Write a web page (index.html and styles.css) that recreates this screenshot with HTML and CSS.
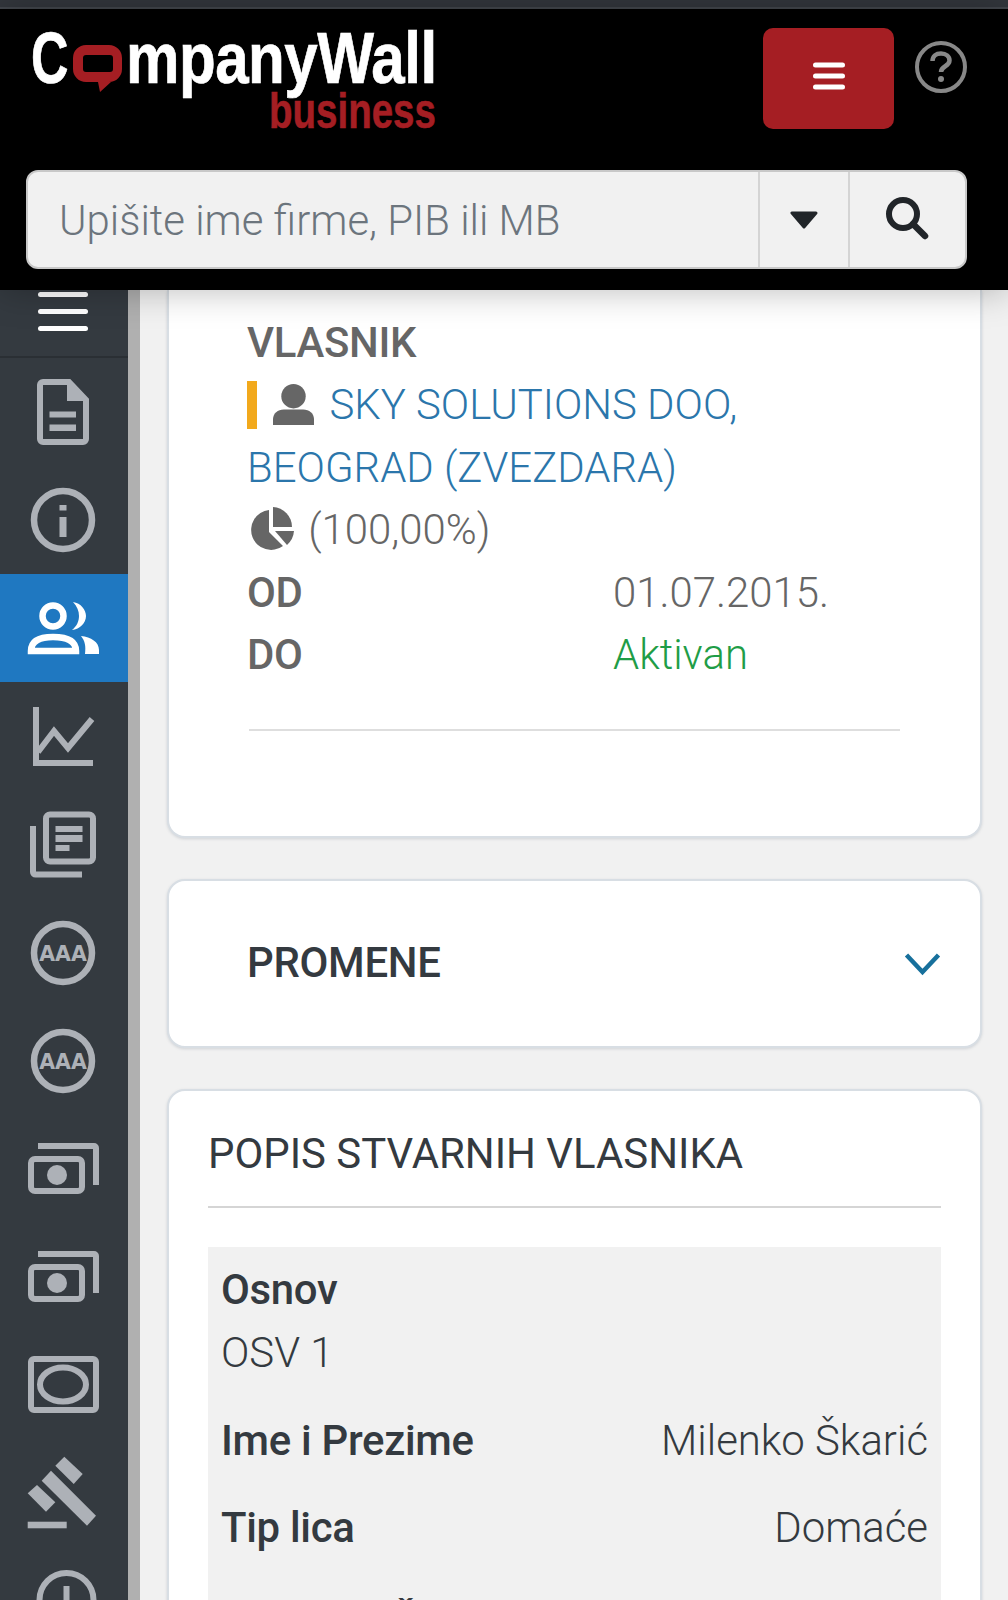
FILE: index.html
```html
<!doctype html>
<html lang="sr">
<head>
  <meta charset="utf-8">
  <title>CompanyWall business</title>
  <meta name="viewport" content="width=device-width,initial-scale=1">
  <link rel="stylesheet" href="styles.css">
</head>
<body>

  <div class="status-strip"></div>

  <!-- Header -->
  <header class="site-header">
    <div class="brand-row">
      <a class="logo" href="#">
        <span class="logo-main">
          <span class="logo-word logo-c">C</span>
          <svg class="logo-bubble" viewBox="0 0 49 47" aria-hidden="true">
            <path fill-rule="evenodd" d="M13 0H36A13 13 0 0 1 49 13V24A13 13 0 0 1 36 37H38L27 47L25 37H13A13 13 0 0 1 0 24V13A13 13 0 0 1 13 0ZM13 10A3 3 0 0 0 10 13V24A3 3 0 0 0 13 27H37A3 3 0 0 0 40 24V13A3 3 0 0 0 37 10Z" fill="#a51e23"/>
          </svg>
          <span class="logo-word logo-rest">mpanyWall</span>
        </span>
        <span class="logo-sub">business</span>
      </a>
      <button class="menu-btn" aria-label="Meni">
        <svg viewBox="0 0 32 28" aria-hidden="true">
          <path d="M2.500 3H29.500M2.500 14H29.500M2.500 25H29.500" stroke="#fff" stroke-width="5" stroke-linecap="round"/>
        </svg>
      </button>
      <svg class="help-icon" viewBox="0 0 52 52" aria-hidden="true">
        <circle cx="26" cy="26" r="24" fill="none" stroke="#888" stroke-width="4"/>
        <path d="M17.500 20C17.500 15 21 12.500 26 12.500C31 12.500 34.500 15.500 34.500 19.500C34.500 25.500 26 25 26 31" fill="none" stroke="#888" stroke-width="4.500"/>
        <circle cx="26" cy="38" r="3" fill="#888"/>
      </svg>
    </div>
    <form class="search">
      <input class="search-input" type="text" placeholder="Upišite ime firme, PIB ili MB">
      <span class="search-cell">
        <svg class="caret-icon" viewBox="0 0 28 18" aria-hidden="true">
          <path d="M2 2H26L14 16Z" fill="#212529" stroke="#212529" stroke-width="3" stroke-linejoin="round"/>
        </svg>
      </span>
      <span class="search-cell search-go">
        <svg class="search-icon" viewBox="0 0 44 44" aria-hidden="true">
          <circle cx="18" cy="18" r="14" fill="none" stroke="#212529" stroke-width="6"/>
          <path d="M28 28L40 40" stroke="#212529" stroke-width="6.500" stroke-linecap="round"/>
        </svg>
      </span>
    </form>
  </header>

  <div class="layout">

    <!-- Sidebar -->
    <aside class="sidebar">
      <div class="side-toggle"><span></span><span></span><span></span></div>

      <a class="side-item" href="#">
        <svg viewBox="0 0 76 76" aria-hidden="true">
          <path class="line" d="M18 8H44L61 26V65A3 3 0 0 1 58 68H18A3 3 0 0 1 15 65V11A3 3 0 0 1 18 8Z"/>
          <path class="solid" d="M42 8V27H61Z"/>
          <rect class="solid" x="24.500" y="37.500" width="26.500" height="6"/>
          <rect class="solid" x="24.500" y="50.500" width="26.500" height="6.500"/>
        </svg>
      </a>
      <a class="side-item" href="#">
        <svg viewBox="0 0 76 76" aria-hidden="true">
          <circle class="line thick" cx="38" cy="38" r="29"/>
          <rect class="solid" x="34.500" y="23" width="7" height="5.500"/>
          <rect class="solid" x="34.500" y="35" width="7" height="20"/>
        </svg>
      </a>
      <a class="side-item active" href="#">
        <svg viewBox="0 0 76 76" aria-hidden="true">
          <circle class="line" cx="28" cy="26" r="10.500"/>
          <path class="line" d="M6 61C6 50 16 47 28 47C40 47 51 50 51 61Z"/>
          <path class="solid" d="M48 12C56 13 61 20 61 26C61 33 55 39 47 40C52 36 54 31 54 26C54 21 52 16 48 12Z"/>
          <path class="solid" d="M56 46C66 47 74 52 74 60V64H60C61 56 60 51 56 46Z"/>
        </svg>
      </a>
      <a class="side-item" href="#">
        <svg viewBox="0 0 76 76" aria-hidden="true">
          <path class="line" d="M11 9V65H68"/>
          <path class="line" d="M13 54L29 33L43 50L67 21"/>
        </svg>
      </a>
      <a class="side-item" href="#">
        <svg viewBox="0 0 76 76" aria-hidden="true">
          <rect class="line" x="21" y="8.500" width="47" height="47" rx="4"/>
          <path class="line" d="M8 20V66A2.500 2.500 0 0 0 10.500 68.500H57"/>
          <rect class="solid" x="30.500" y="20" width="27" height="6"/>
          <rect class="solid" x="30.500" y="29" width="27" height="7"/>
          <rect class="solid" x="30.500" y="39" width="14" height="6"/>
        </svg>
      </a>
      <a class="side-item" href="#">
        <svg viewBox="0 0 76 76" aria-hidden="true">
          <circle class="line thick" cx="38" cy="39" r="29"/>
          <text class="aaa" x="38" y="46.500" text-anchor="middle">AAA</text>
        </svg>
      </a>
      <a class="side-item" href="#">
        <svg viewBox="0 0 76 76" aria-hidden="true">
          <circle class="line thick" cx="38" cy="39" r="29"/>
          <text class="aaa" x="38" y="46.500" text-anchor="middle">AAA</text>
        </svg>
      </a>
      <a class="side-item" href="#">
        <svg viewBox="0 0 76 76" aria-hidden="true">
          <path class="line" d="M13 16H69A2 2 0 0 1 71 18V55"/>
          <rect class="line" x="6" y="29" width="51" height="32" rx="4"/>
          <circle class="solid" cx="32" cy="45" r="10"/>
        </svg>
      </a>
      <a class="side-item" href="#">
        <svg viewBox="0 0 76 76" aria-hidden="true">
          <path class="line" d="M13 16H69A2 2 0 0 1 71 18V55"/>
          <rect class="line" x="6" y="29" width="51" height="32" rx="4"/>
          <circle class="solid" cx="32" cy="45" r="10"/>
        </svg>
      </a>
      <a class="side-item" href="#">
        <svg viewBox="0 0 76 76" aria-hidden="true">
          <rect class="line" x="6" y="13" width="65" height="51" rx="3"/>
          <ellipse class="line" cx="38" cy="38.500" rx="23" ry="17"/>
        </svg>
      </a>
      <a class="side-item" href="#">
        <svg viewBox="0 0 76 76" aria-hidden="true">
          <path class="solid" d="M39.300 2.700L57.700 20L48.700 30L30.300 11.700Z"/>
          <path class="solid" d="M26 16.700L71 61.700L62 71.700L16.700 26.700Z"/>
          <path class="solid" d="M12 31L30.300 48.300L21 57.700L2.700 39.300Z"/>
          <rect class="solid" x="2.700" y="67.700" width="39" height="6.600"/>
        </svg>
      </a>
      <a class="side-item" href="#">
        <svg viewBox="0 0 76 76" aria-hidden="true">
          <circle class="line" cx="41.500" cy="38" r="27"/>
          <path class="line" d="M41.500 24V40"/>
        </svg>
      </a>
    </aside>

    <div class="scroll-track"></div>

    <!-- Content -->
    <main class="content">
      <section class="card card-owner">
        <h3 class="owner-title">VLASNIK</h3>
        <p class="owner-name">
          <span class="owner-mark"></span>
          <svg class="owner-person" viewBox="0 0 42 42" aria-hidden="true">
            <circle cx="21" cy="12.500" r="12.500" fill="#666"/>
            <path d="M0 42V36C0 30 5 26 11 26H31C37 26 42 30 42 36V42Z" fill="#666"/>
          </svg>
          <a href="#">SKY SOLUTIONS DOO, BEOGRAD (ZVEZDARA)</a>
        </p>
        <p class="owner-share">
          <svg class="pie-icon" viewBox="0 0 44 44" aria-hidden="true">
            <path d="M19 3A20 20 0 1 0 33 39L19 25Z" fill="#666"/>
            <path d="M23 0A20 20 0 0 1 42 20H23Z" fill="#666"/>
            <path d="M25 24H44A21 21 0 0 1 37 38Z" fill="#666"/>
          </svg>
          (100,00%)
        </p>
        <dl class="owner-dates">
          <dt>OD</dt><dd>01.07.2015.</dd>
          <dt>DO</dt><dd class="is-active">Aktivan</dd>
        </dl>
        <hr class="owner-rule">
      </section>

      <section class="card card-changes">
        <h3 class="changes-title">PROMENE</h3>
        <svg class="chevron" viewBox="0 0 38 24" aria-hidden="true">
          <path d="M3 3L19 20L35 3" fill="none" stroke="#17709c" stroke-width="4.500"/>
        </svg>
      </section>

      <section class="card card-register">
        <h3 class="register-title">POPIS STVARNIH VLASNIKA</h3>
        <div class="register-box">
          <div class="reg-stack">
            <strong>Osnov</strong>
            <span>OSV 1</span>
          </div>
          <div class="reg-row"><strong>Ime i Prezime</strong><span>Milenko Škarić</span></div>
          <div class="reg-row"><strong>Tip lica</strong><span>Domaće</span></div>
          <div class="reg-row"><strong>Mesto/Država</strong><span></span></div>
        </div>
      </section>
    </main>
  </div>

</body>
</html>
```

FILE: styles.css
```css
/* ---------- Reset ---------- */
*,*::before,*::after{box-sizing:border-box}
html,body{height:100%}
body{margin:0;width:1008px;height:1600px;overflow:hidden;display:flex;flex-direction:column;
     background:#f1f1f1;
     font-family:Roboto,"Liberation Sans",sans-serif;
     font-size:41.9px;line-height:62.4px;color:#343a40}
h3,p,dl,dd{margin:0}
a{text-decoration:none;color:inherit}

/* ---------- Header ---------- */
.status-strip{height:9px;background:#33373d;border-bottom:2px solid #44484e;flex:none}
.site-header{flex:none;height:281px;background:#000;padding:19px 41px 0 26px;
             display:flex;flex-direction:column;position:relative;z-index:2;
             box-shadow:0 0 34px rgb(0 0 0 / .28)}
.brand-row{display:flex;align-items:flex-start;height:133px}

/* logo face is squeezed from Liberation Sans, no condensed face is installed */
.logo{display:flex;flex-direction:column;align-items:flex-end;width:406px;margin:-3px 0 0 5px}
.logo-main{display:flex;align-items:flex-start;height:66px;align-self:stretch}
.logo-word{font-family:"Liberation Sans",sans-serif;font-weight:700;font-size:72px;line-height:66px;
           color:#fff;display:block;transform-origin:0 0;white-space:nowrap;
           -webkit-text-stroke:.7px #fff}
.logo-c{width:39px;transform:scaleX(.72)}
.logo-rest{width:310px;transform:scaleX(.835);letter-spacing:-.6px;margin-left:-1px}
.logo-bubble{width:49px;height:47px;margin:20px 5px 0 3px;flex:none}
.logo-sub{font-family:"Liberation Sans",sans-serif;font-weight:700;font-size:50px;line-height:46px;
          color:#a51e23;width:168px;transform:scaleX(.77);transform-origin:0 0;margin-top:-3px;
          -webkit-text-stroke:.6px #a51e23}

.menu-btn{width:131px;height:101px;margin:0 0 0 auto;border:0;border-radius:10px;background:#a51e23;
          display:flex;align-items:center;justify-content:center;padding:0}
.menu-btn svg{width:32px;height:28px;margin-bottom:5px}
.help-icon{width:52px;height:52px;margin:13px 0 0 21px;flex:none}

.search{display:flex;height:99px;background:#f1f1f1;border:2px solid #c8c8c8;border-radius:12px;margin-top:9px}
.search-input{flex:1;min-width:0;border:0;background:none;padding:4px 0 0 31px;outline:0;
              font:300 41.9px/62.4px Roboto,sans-serif;color:#6c757d}
.search-input::placeholder{color:#6c757d;opacity:1}
.search-cell{width:90px;border-left:2px solid #d4d4d4;display:flex;align-items:center;justify-content:center}
.search-go{width:117px}
.caret-icon{width:28px;height:18px}
.search-icon{width:44px;height:44px;margin:0 2px 4px 0}

/* ---------- Layout ---------- */
.layout{flex:1;min-height:0;display:flex;overflow:hidden}
.sidebar{width:128px;flex:none;background:#343a40}
.scroll-track{width:12px;flex:none;background:#b0b0b0}
.content{flex:1;min-width:0;padding:0 26px 0 27px;display:flex;flex-direction:column;gap:41px}

/* ---------- Sidebar ---------- */
.side-toggle{height:68px;padding:2px 3px 0 0;border-bottom:2px solid #2a2f34;
             display:flex;flex-direction:column;align-items:center;gap:12px}
.side-toggle span{width:50px;height:5px;border-radius:3px;background:#fff}
.side-item{height:108px;padding-right:3px;display:flex;align-items:center;justify-content:center}
.side-item svg{width:76px;height:76px;overflow:visible}
.side-item .line{fill:none;stroke:#adb1b7;stroke-width:6}
.side-item .thick{stroke-width:6.500}
.side-item .solid{fill:#adb1b7}
.side-item .aaa{font:700 20.500px "DejaVu Sans",sans-serif;fill:#adb1b7}
.side-item.active{background:#1f78c1}
.side-item.active .line{stroke:#fff;stroke-width:6.500}
.side-item.active .solid{fill:#fff}

/* ---------- Cards ---------- */
.card{flex:none;background:#fff;border:2px solid #d8dee4;border-radius:18px;
      box-shadow:0 1px 3px rgb(60 80 100 / .18)}

.card-owner{height:548px;padding:22px 80px 0 78px;border-top:0;border-radius:0 0 18px 18px;color:#666}
.owner-title{font-size:inherit;font-weight:500;letter-spacing:-.3px;line-height:62.4px}
.owner-name{font-weight:300}
.owner-name a{color:#2b76ab}
.owner-mark{display:inline-block;width:10px;height:48px;background:#f2a91c;vertical-align:-10px;margin-right:6px}
.owner-person{width:41px;height:41px;vertical-align:-6px;margin-right:5px}
.owner-share{font-weight:300}
.pie-icon{width:44px;height:44px;vertical-align:-7px;margin:0 4px 0 3px}
.owner-dates{display:grid;grid-template-columns:366px 1fr}
.owner-dates dt{font-weight:500;letter-spacing:-.3px}
.owner-dates dd{font-weight:300}
.owner-dates .is-active{color:#1f9d47}
.owner-rule{border:0;border-top:2px solid #dedede;margin:43px 0 0 2px}

.card-changes{height:169px;padding:0 38px 0 78px;display:flex;align-items:center;justify-content:space-between}
.changes-title{font-size:inherit;font-weight:500;letter-spacing:-.3px;color:#343a40}
.chevron{width:39px;height:24px}

.card-register{padding:32px 39px 0}
.register-title{font-size:inherit;font-weight:400;line-height:62.4px;color:#343a40;
                padding-bottom:21px;border-bottom:2px solid #d5d5d5}
.register-box{margin-top:39px;background:#f1f1f1;padding:12px 13px 40px;color:#343a40}
.register-box strong{font-weight:500;letter-spacing:-.3px}
.register-box span{font-weight:300}
.reg-stack{display:flex;flex-direction:column}
.reg-row{display:flex;justify-content:space-between;margin-top:25px}
.reg-stack + .reg-row{margin-top:25.500px}
```
